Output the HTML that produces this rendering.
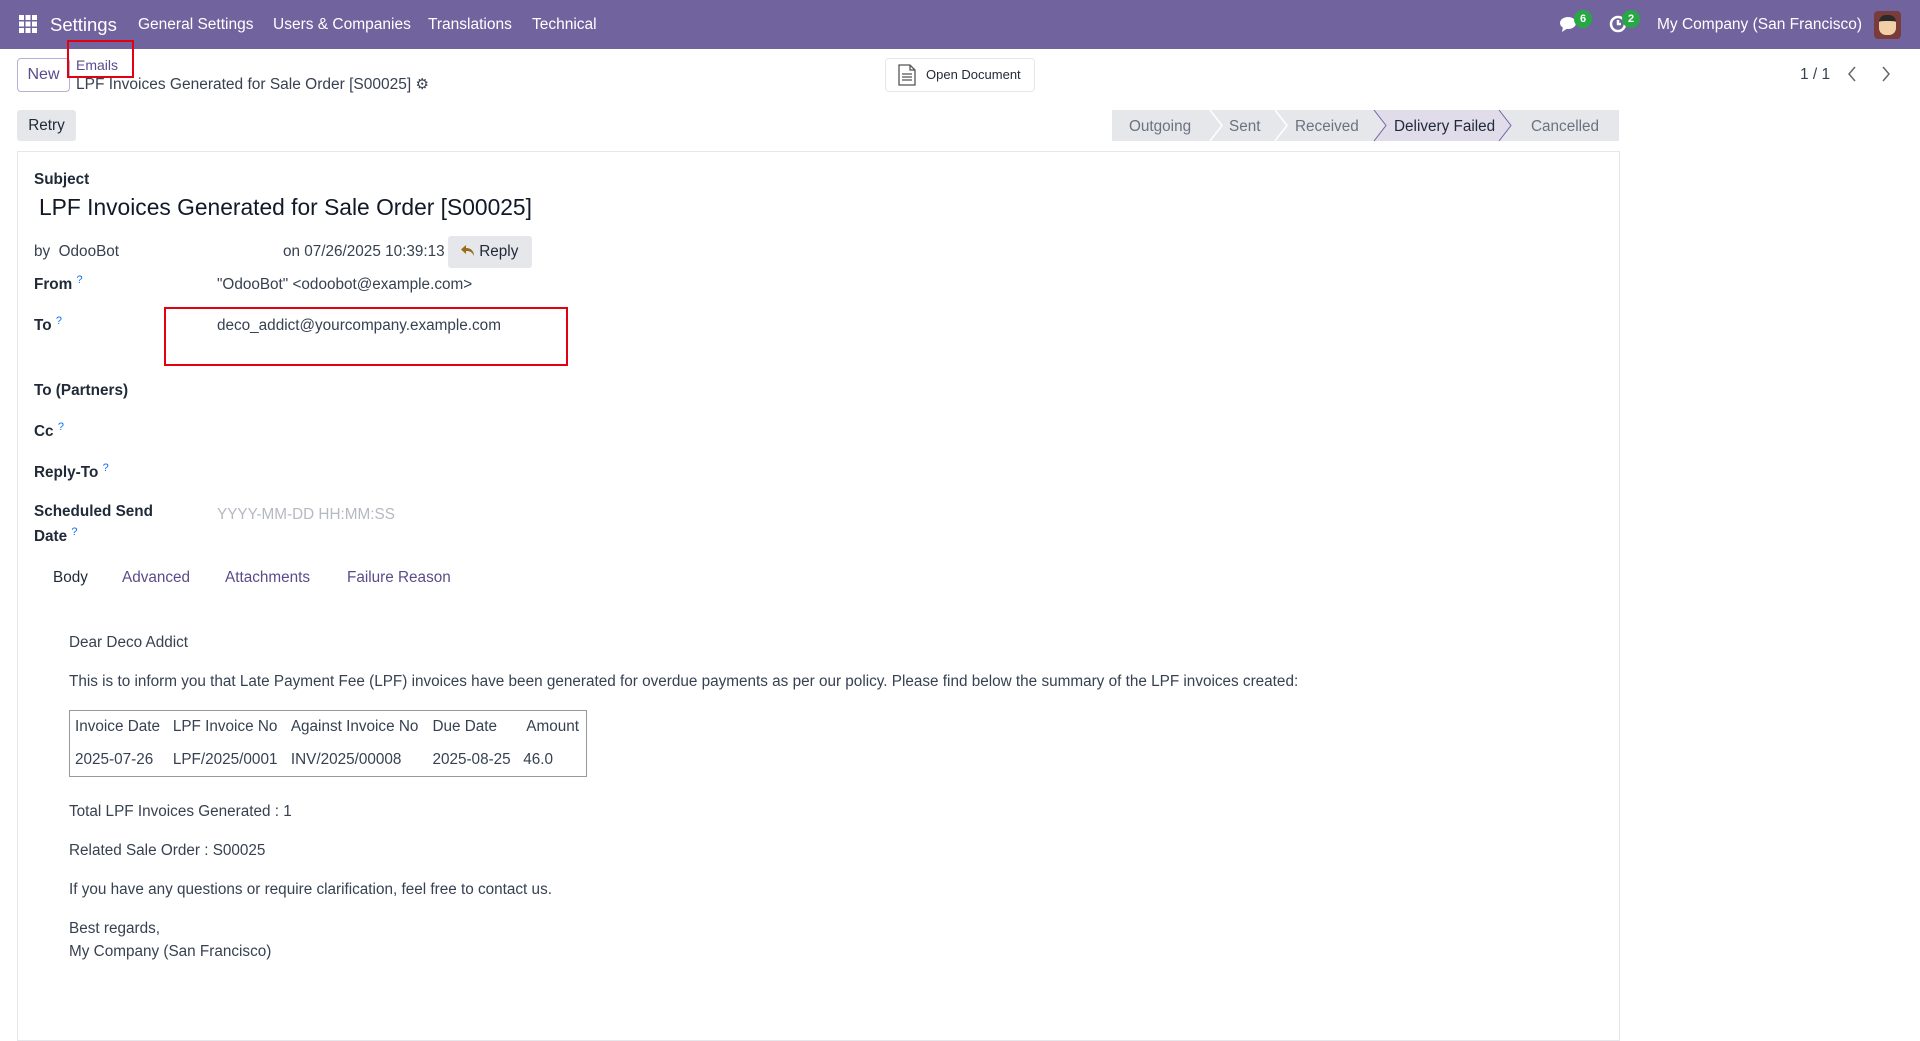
<!DOCTYPE html>
<html><head><meta charset="utf-8"><style>
*{box-sizing:border-box;margin:0;padding:0}
body{width:1920px;height:1037px;overflow:hidden;background:#fff;font-family:"Liberation Sans",sans-serif;color:#374151;font-size:15.3px;position:relative}
.a{position:absolute;white-space:nowrap}
.nav{position:absolute;left:0;top:0;width:1920px;height:49px;background:#71639e;color:#fff}
.nav .a{font-size:15.5px;top:16px}
.lbl{font-weight:bold;color:#1f2937}
.q{color:#0d6efd;font-size:11px;vertical-align:super;font-weight:normal}
.tab{color:#5b4b8a}
td{padding:0 5px;height:33px;font-size:15.3px;color:#374151}
</style></head><body>
<div class="nav">
 <svg class="a" style="left:19px;top:15px" width="18" height="18" viewBox="0 0 18 18" fill="#fff"><rect x="0" y="0" width="5" height="5"/><rect x="6.5" y="0" width="5" height="5"/><rect x="13" y="0" width="5" height="5"/><rect x="0" y="6.5" width="5" height="5"/><rect x="6.5" y="6.5" width="5" height="5"/><rect x="13" y="6.5" width="5" height="5"/><rect x="0" y="13" width="5" height="5"/><rect x="6.5" y="13" width="5" height="5"/><rect x="13" y="13" width="5" height="5"/></svg>
 <div class="a" style="left:50px;top:14px;font-size:18.5px">Settings</div>
 <div class="a" style="left:138px">General Settings</div>
 <div class="a" style="left:273px">Users &amp; Companies</div>
 <div class="a" style="left:428px">Translations</div>
 <div class="a" style="left:532px">Technical</div>
 <svg class="a" style="left:1560px;top:16px" width="20" height="18" viewBox="0 0 20 18" fill="#fff"><ellipse cx="8" cy="7" rx="8" ry="6"/><path d="M3 11 L2 16 L8 12Z"/></svg>
 <div class="a" style="left:1574px;top:10px;width:18px;height:18px;border-radius:9px;background:#28a745;font-size:11px;text-align:center;line-height:18px;font-weight:bold">6</div>
 <svg class="a" style="left:1609px;top:15px" width="18" height="18" viewBox="0 0 18 18" fill="none" stroke="#fff" stroke-width="2.5"><circle cx="9" cy="9" r="7"/><path d="M9 5v4h3"/></svg>
 <div class="a" style="left:1622px;top:10px;width:18px;height:18px;border-radius:9px;background:#28a745;font-size:11px;text-align:center;line-height:18px;font-weight:bold">2</div>
 <div class="a" style="left:1657px">My Company (San Francisco)</div>
 <div class="a" style="left:1874px;top:11px;width:27px;height:28px;border-radius:4px;background:#7a3b3b"><div style="margin:4px 5px;width:17px;height:20px;border-radius:7px;background:#f3cfa8;border-top:6px solid #2a2a2a"></div></div>
</div>
<div class="a" style="left:17px;top:58px;width:53px;height:34px;border:1px solid #b8b0d4;border-radius:4px;color:#5b4b8a;font-size:16px;text-align:center;line-height:32px">New</div>
<div class="a" style="left:76px;top:57px;font-size:14px;color:#5b4b8a">Emails</div>
<div class="a" style="left:67px;top:40px;width:67px;height:38px;border:2px solid #e3000f"></div>
<div class="a" style="left:76px;top:75px;font-size:15.5px;color:#374151">LPF Invoices Generated for Sale Order [S00025] <span style="font-size:15px">⚙</span></div>
<div class="a" style="left:885px;top:58px;width:150px;height:34px;border:1px solid #e5e7eb;border-radius:4px;font-size:13px;line-height:32px;padding-left:40px;color:#1f2937">Open Document</div>
<svg class="a" style="left:898px;top:64px" width="18" height="22" viewBox="0 0 18 22" fill="none" stroke="#555" stroke-width="1.3"><path d="M1 1h11l5 5v15H1z M12 1v5h5 M4 10h10 M4 13h10 M4 16h10"/></svg>
<div class="a" style="left:1800px;top:66px;font-size:15.5px">1 / 1</div>
<svg class="a" style="left:1847px;top:66px" width="10" height="16" viewBox="0 0 10 16" fill="none" stroke="#666" stroke-width="1.5"><path d="M8 1L2 8l6 7"/></svg>
<svg class="a" style="left:1881px;top:66px" width="10" height="16" viewBox="0 0 10 16" fill="none" stroke="#666" stroke-width="1.5"><path d="M2 1l6 7-6 7"/></svg>
<div class="a" style="left:17px;top:110px;width:59px;height:31px;background:#e5e7eb;border-radius:3px;text-align:center;line-height:31px;color:#1f2937;font-size:15.3px">Retry</div>
<svg class="a" style="left:1112px;top:110px" width="507" height="31" viewBox="0 0 507 31"><rect width="507" height="31" fill="#e5e7eb"/><path d="M262 0h125l12 15.5-12 15.5H262l12-15.5z" fill="#e0dcea"/><g fill="none" stroke="#fff" stroke-width="1.5"><path d="M98 0l12 15.5L98 31M163 0l12 15.5L163 31"/></g><path d="M262 0l12 15.5L262 31M387 0l12 15.5L387 31" fill="none" stroke="#7565a5" stroke-width="1"/><g font-family="Liberation Sans" font-size="15.3" fill="#6b7280"><text x="17" y="21">Outgoing</text><text x="117" y="21">Sent</text><text x="183" y="21">Received</text><text x="282" y="21" fill="#1f2937">Delivery Failed</text><text x="419" y="21">Cancelled</text></g></svg>
<div class="a" style="left:17px;top:151px;width:1603px;height:890px;border:1px solid #e5e7eb"></div>
<div class="a lbl" style="left:34px;top:171px">Subject</div>
<div class="a" style="left:39px;top:194px;font-size:22.8px;color:#111827">LPF Invoices Generated for Sale Order [S00025]</div>
<div class="a" style="left:34px;top:243px">by &nbsp;OdooBot</div>
<div class="a" style="left:283px;top:243px">on 07/26/2025 10:39:13</div>
<div class="a" style="left:448px;top:236px;width:84px;height:32px;background:#e5e7eb;border-radius:3px;line-height:32px;padding-left:12px;color:#1f2937"><svg width="15" height="13" viewBox="0 0 15 13" style="vertical-align:-1px"><path d="M6 1L1 5.5 6 10V7c4 0 6 1 8 5 0-5-3-8-8-8z" fill="#9a6b16"/></svg> Reply</div>
<div class="a lbl" style="left:34px;top:274px">From <span class="q">?</span></div>
<div class="a" style="left:217px;top:276px">"OdooBot" &lt;odoobot@example.com&gt;</div>
<div class="a lbl" style="left:34px;top:315px">To <span class="q">?</span></div>
<div class="a" style="left:217px;top:317px">deco_addict@yourcompany.example.com</div>
<div class="a" style="left:164px;top:307px;width:404px;height:59px;border:2px solid #e3000f"></div>
<div class="a lbl" style="left:34px;top:382px">To (Partners)</div>
<div class="a lbl" style="left:34px;top:421px">Cc <span class="q">?</span></div>
<div class="a lbl" style="left:34px;top:462px">Reply-To <span class="q">?</span></div>
<div class="a lbl" style="left:34px;top:503px">Scheduled Send</div>
<div class="a lbl" style="left:34px;top:526px">Date <span class="q">?</span></div>
<div class="a" style="left:217px;top:506px;color:#b5b9c0">YYYY-MM-DD HH:MM:SS</div>
<div class="a" style="left:53px;top:569px;color:#1f2937">Body</div>
<div class="a tab" style="left:122px;top:569px">Advanced</div>
<div class="a tab" style="left:225px;top:569px">Attachments</div>
<div class="a tab" style="left:347px;top:569px">Failure Reason</div>
<div class="a" style="left:69px;top:634px">Dear Deco Addict</div>
<div class="a" style="left:69px;top:673px">This is to inform you that Late Payment Fee (LPF) invoices have been generated for overdue payments as per our policy. Please find below the summary of the LPF invoices created:</div>
<table class="a" style="left:69px;top:710px;width:518px;height:67px;border:1px solid #999;border-collapse:collapse">
<tr><td>Invoice Date</td><td>LPF Invoice No</td><td>Against Invoice No</td><td>Due Date</td><td style="padding-left:8px">Amount</td></tr>
<tr><td>2025-07-26</td><td>LPF/2025/0001</td><td>INV/2025/00008</td><td>2025-08-25</td><td>46.0</td></tr>
</table>
<div class="a" style="left:69px;top:803px">Total LPF Invoices Generated : 1</div>
<div class="a" style="left:69px;top:842px">Related Sale Order : S00025</div>
<div class="a" style="left:69px;top:881px">If you have any questions or require clarification, feel free to contact us.</div>
<div class="a" style="left:69px;top:920px">Best regards,</div>
<div class="a" style="left:69px;top:943px">My Company (San Francisco)</div>
</body></html>
